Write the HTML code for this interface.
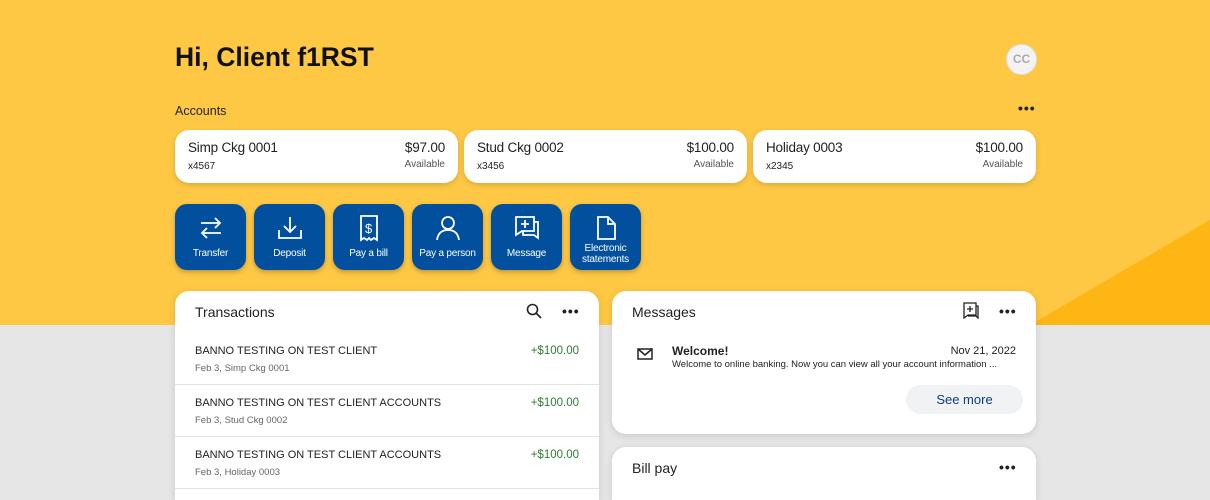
<!DOCTYPE html>
<html><head><style>
*{box-sizing:border-box;margin:0;padding:0}
html,body{width:1210px;height:500px;overflow:hidden}
body{font-family:"Liberation Sans",sans-serif;background:#e6e6e6;position:relative;color:#222}
#w{position:absolute;left:0;top:0;width:1210px;height:500px;overflow:hidden}
.top{position:absolute;left:0;top:0;width:1210px;height:325px;background:#fec845;overflow:hidden}
.tri{position:absolute;left:0;top:0}
h1{position:absolute;left:175px;top:42px;font-size:26.5px;font-weight:bold;color:#111}
.av{position:absolute;left:1006px;top:44px;width:31px;height:31px;border-radius:50%;background:#f3f3f3;border:1px solid #ddd;color:#aaa;font-size:12px;font-weight:bold;text-align:center;line-height:29px}
.lbl{position:absolute;left:175px;top:104px;font-size:12.5px}
.dots{position:absolute;font-size:14px;font-weight:bold;letter-spacing:1px}
.acc{position:absolute;top:130px;width:283px;height:53px;background:#fff;border-radius:14px;box-shadow:0 2px 6px rgba(0,0,0,.15)}
.acc .n{position:absolute;left:13px;top:10px;font-size:13.5px;letter-spacing:-0.2px}
.acc .x{position:absolute;left:13px;top:31px;font-size:10px}
.acc .a{position:absolute;right:13px;top:10px;font-size:13.5px;letter-spacing:-0.2px}
.acc .v{position:absolute;right:13px;top:29px;font-size:10px;color:#555}
.btn{position:absolute;top:204px;width:71px;height:66px;background:#02509d;border-radius:12px;box-shadow:0 2px 5px rgba(0,0,0,.25);color:#fff;font-size:10px;text-align:center;letter-spacing:-0.2px}
.btn svg{position:absolute;left:22px;top:10px}
.btn span{position:absolute;left:0;right:0;top:44px}
.card{position:absolute;background:#fff;border-radius:14px;box-shadow:0 2px 8px rgba(0,0,0,.12)}
.ct{position:absolute;font-size:14px}
.tx{position:absolute;left:0;width:424px;height:52px;border-bottom:1px solid #e4e4e4}
.tx .d{position:absolute;left:20px;top:12px;font-size:11px}
.tx .s{position:absolute;left:20px;top:30px;font-size:9.5px;color:#666}
.tx .m{position:absolute;right:20px;top:12px;font-size:11.5px;color:#2e7d32}
</style></head><body><div id="w">
<div class="top">
<svg class="tri" width="1210" height="325"><polygon points="1030,325 1210,220 1210,325" fill="#fdb614"/></svg>
</div>
<h1>Hi, Client f1RST</h1>
<div class="av">CC</div>
<div class="lbl">Accounts</div>
<div class="dots" style="left:1018px;top:100px">•••</div>
<div class="acc" style="left:175px"><div class="n">Simp Ckg 0001</div><div class="x">x4567</div><div class="a">$97.00</div><div class="v">Available</div></div>
<div class="acc" style="left:464px"><div class="n">Stud Ckg 0002</div><div class="x">x3456</div><div class="a">$100.00</div><div class="v">Available</div></div>
<div class="acc" style="left:753px"><div class="n">Holiday 0003</div><div class="x">x2345</div><div class="a">$100.00</div><div class="v">Available</div></div>

<div class="btn" style="left:175px"><svg width="28" height="28" fill="none" stroke="#fff" stroke-width="1.8"><path d="M4 9h19M18 4l5 5-5 5M24 19H5M10 14l-5 5 5 5"/></svg><span>Transfer</span></div>
<div class="btn" style="left:254px"><svg width="28" height="28" fill="none" stroke="#fff" stroke-width="1.8"><path d="M14 3v15M8 12l6 6 6-6M3 16v8h22v-8"/></svg><span>Deposit</span></div>
<div class="btn" style="left:333px"><svg width="28" height="28" fill="none" stroke="#fff" stroke-width="1.8"><path d="M6 2h16v24l-3-2-3 2-2-2-2 2-3-2-3 2z"/><text x="10" y="19" font-size="13" fill="#fff" stroke="none" font-family="Liberation Sans">$</text></svg><span>Pay a bill</span></div>
<div class="btn" style="left:412px"><svg width="28" height="28" fill="none" stroke="#fff" stroke-width="1.8"><circle cx="14" cy="9" r="6"/><path d="M3 26c1-7 5-10 11-10s10 3 11 10"/></svg><span>Pay a person</span></div>
<div class="btn" style="left:491px"><svg width="28" height="28" fill="none" stroke="#fff" stroke-width="1.8"><path d="M3 3h18v14H9l-6 4zM21 8h4v16l-4-3H10v-4M12 6v8M8 10h8"/></svg><span>Message</span></div>
<div class="btn" style="left:570px"><svg width="28" height="28" fill="none" stroke="#fff" stroke-width="1.8"><path d="M6 3h10l7 7v15H6zM16 3v7h7"/></svg><span style="top:39px;line-height:11px">Electronic<br>statements</span></div>

<div class="card" style="left:175px;top:291px;width:424px;height:209px;border-radius:14px 14px 0 0">
<div class="ct" style="left:20px;top:13px">Transactions</div>
<svg style="position:absolute;left:351px;top:12px" width="16" height="16" fill="none" stroke="#222" stroke-width="1.6"><circle cx="6.5" cy="6.5" r="5"/><path d="M10 10l5 5"/></svg>
<div class="dots" style="left:387px;top:12px">•••</div>
<div class="tx" style="top:42px"><div class="d">BANNO TESTING ON TEST CLIENT</div><div class="s">Feb 3, Simp Ckg 0001</div><div class="m">+$100.00</div></div>
<div class="tx" style="top:94px"><div class="d">BANNO TESTING ON TEST CLIENT ACCOUNTS</div><div class="s">Feb 3, Stud Ckg 0002</div><div class="m">+$100.00</div></div>
<div class="tx" style="top:146px"><div class="d">BANNO TESTING ON TEST CLIENT ACCOUNTS</div><div class="s">Feb 3, Holiday 0003</div><div class="m">+$100.00</div></div>
</div>

<div class="card" style="left:612px;top:291px;width:424px;height:143px">
<div class="ct" style="left:20px;top:13px">Messages</div>
<svg style="position:absolute;left:350px;top:10px" width="18" height="18" fill="none" stroke="#222" stroke-width="1.3"><path d="M2 2h12v12H6l-4 3zM14 5h2v12l-2-2H6M8 5v6M5 8h6"/></svg>
<div class="dots" style="left:387px;top:12px">•••</div>
<svg style="position:absolute;left:25px;top:57px" width="16" height="12" fill="none" stroke="#222" stroke-width="1.5"><rect x="1" y="1" width="14" height="10"/><path d="M1 1l7 6 7-6"/></svg>
<div style="position:absolute;left:60px;top:53px;font-size:12px;font-weight:bold">Welcome!</div>
<div style="position:absolute;right:20px;top:54px;font-size:11px">Nov 21, 2022</div>
<div style="position:absolute;left:60px;top:68px;font-size:9.5px">Welcome to online banking. Now you can view all your account information ...</div>
<div style="position:absolute;left:294px;top:94px;width:117px;height:29px;border-radius:15px;background:#f1f2f4;color:#0a3f7a;font-size:13px;text-align:center;line-height:29px">See more</div>
</div>

<div class="card" style="left:612px;top:447px;width:424px;height:53px;border-radius:14px 14px 0 0">
<div class="ct" style="left:20px;top:13px">Bill pay</div>
<div class="dots" style="left:387px;top:12px">•••</div>
</div>
</div></body></html>
